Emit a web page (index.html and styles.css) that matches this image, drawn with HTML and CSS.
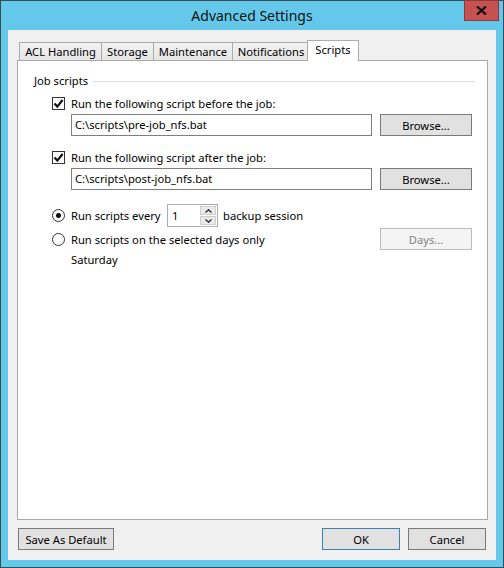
FILE: index.html
```html
<!DOCTYPE html>
<html lang="en">
<head>
    <meta charset="UTF-8">
    <title>Advanced Settings</title>
    <link rel="stylesheet" href="styles.css">
</head>
<body>
    <div class="window">
        <div class="titlebar">
            <span class="title">Advanced Settings</span>
            <button class="close">
                <svg width="11" height="9" viewBox="0 0 11 9"><path d="M1 0.5 L10 8.5 M10 0.5 L1 8.5" stroke="#111" stroke-width="2.2"/></svg>
            </button>
        </div>
        <div class="client">
            <div class="tabs">
                <div class="tab tab-acl">ACL Handling</div>
                <div class="tab tab-storage">Storage</div>
                <div class="tab tab-maint">Maintenance</div>
                <div class="tab tab-notif">Notifications</div>
                <div class="tab tab-active">Scripts</div>
            </div>
            <div class="panel">
                <div class="group-title">
                    <span>Job scripts</span>
                    <div class="group-line"></div>
                </div>

                <!-- before the job -->
                <div class="check-row row-first">
                    <span class="checkbox">
                        <svg width="11" height="11" viewBox="0 0 11 11"><path d="M1.5 5.5 L4.3 8.6 L9.6 2" fill="none" stroke="#111" stroke-width="2.2"/></svg>
                    </span>
                    <span>Run the following script before the job:</span>
                </div>
                <div class="path-row">
                    <div class="textbox">C:\scripts\pre-job_nfs.bat</div>
                    <button class="btn">Browse...</button>
                </div>

                <!-- after the job -->
                <div class="check-row row-second">
                    <span class="checkbox">
                        <svg width="11" height="11" viewBox="0 0 11 11"><path d="M1.5 5.5 L4.3 8.6 L9.6 2" fill="none" stroke="#111" stroke-width="2.2"/></svg>
                    </span>
                    <span>Run the following script after the job:</span>
                </div>
                <div class="path-row">
                    <div class="textbox">C:\scripts\post-job_nfs.bat</div>
                    <button class="btn">Browse...</button>
                </div>

                <div class="radio-row row-every">
                    <span class="radio checked"></span>
                    <span class="every-label">Run scripts every</span>
                    <div class="spinner">
                        <span class="spin-value">1</span>
                        <div class="spin-btns">
                            <span class="spin-btn">
                                <svg width="7" height="4" viewBox="0 0 7 4"><path d="M0.5 3.5 L3.5 0.8 L6.5 3.5" fill="none" stroke="#222" stroke-width="1.2"/></svg>
                            </span>
                            <span class="spin-btn">
                                <svg width="7" height="4" viewBox="0 0 7 4"><path d="M0.5 0.5 L3.5 3.2 L6.5 0.5" fill="none" stroke="#222" stroke-width="1.2"/></svg>
                            </span>
                        </div>
                    </div>
                    <span class="after-spin">backup session</span>
                </div>

                <div class="radio-row row-days">
                    <span class="radio"></span>
                    <span>Run scripts on the selected days only</span>
                    <button class="btn btn-disabled">Days...</button>
                </div>
                <div class="days-text">Saturday</div>
            </div>
            <div class="footer">
                <button class="btn btn-default">Save As Default</button>
                <div class="footer-right">
                    <button class="btn btn-ok">OK</button>
                    <button class="btn btn-cancel">Cancel</button>
                </div>
            </div>
        </div>
    </div>
</body>
</html>
```

FILE: styles.css
```css
body {
    margin: 0;
    font-family: 'Noto Sans', 'Open Sans', sans-serif;
    font-size: 11.2px;
    color: #000;
}

.window {
    width: 504px;
    height: 568px;
    box-sizing: border-box;
    border: 1px solid #3a4a52;
    background-color: #63c8e9;
    display: flex;
    flex-direction: column;
}

.titlebar {
    height: 29px;
    display: grid;
    grid-template-columns: 1fr auto 1fr;
}

.title {
    grid-column: 2;
    font-size: 14px;
    line-height: 29px;
    color: #111;
}

.close {
    grid-column: 3;
    justify-self: end;
    align-self: start;
    width: 35px;
    height: 21px;
    margin: -1px 4px 0 0;
    padding: 0;
    border: 1px solid #8a3c3c;
    background-color: #c75050;
    display: flex;
    align-items: center;
    justify-content: center;
}

.client {
    flex: 1;
    margin: 0 7px 7px;
    background-color: #f0f0f0;
    padding: 10px 8px 10px 9px;
    display: flex;
    flex-direction: column;
}

/* tab strip */
.tabs {
    height: 20px;
    display: flex;
    align-items: flex-end;
    padding-left: 2px;
}

.tab {
    height: 18px;
    box-sizing: border-box;
    border: 1px solid #acacac;
    border-bottom: none;
    margin-right: -1px;
    background: linear-gradient(#f2f2f2, #e6e6e6);
    text-align: center;
    line-height: 18px;
    white-space: nowrap;
}

.tab-acl { width: 83px; }
.tab-storage { width: 53px; }
.tab-maint { width: 80px; }
.tab-notif { width: 78px; }

.tab-active {
    position: relative;
    z-index: 1;
    width: 52px;
    height: 21px;
    margin-left: -2px;
    margin-bottom: -1px;
    background: #fff;
    line-height: 18px;
}

.panel {
    height: 460px;
    box-sizing: border-box;
    border: 1px solid #a9a9a9;
    background-color: #fff;
    padding: 12px 12px 0 16px;
}

.group-title {
    display: flex;
    align-items: center;
    height: 16px;
    line-height: 16px;
}

.group-line {
    flex: 1;
    height: 1px;
    background-color: #dcdcdc;
    margin-left: 5px;
}

.check-row, .radio-row {
    display: flex;
    align-items: center;
    padding-left: 18px;
    height: 16px;
    white-space: nowrap;
}

.row-first { margin-top: 6px; }
.row-second { margin-top: 13px; }

.checkbox {
    width: 13px;
    height: 13px;
    box-sizing: border-box;
    border: 1px solid #333;
    background: #fff;
    margin-right: 6px;
    display: flex;
    align-items: center;
    justify-content: center;
}

.path-row {
    display: flex;
    margin: 3px 0 0 37px;
    gap: 8px;
}

.textbox {
    width: 301px;
    height: 22px;
    box-sizing: border-box;
    border: 1px solid #7f7f7f;
    background: #fff;
    padding-left: 3px;
    line-height: 20px;
}

.btn {
    font-family: inherit;
    font-size: 11.2px;
    color: #000;
    height: 22px;
    width: 92px;
    box-sizing: border-box;
    padding: 0;
    border: 1px solid #7a7a7a;
    background-color: #e1e1e1;
}

.btn-disabled {
    margin-left: auto;
    margin-right: 3px;
    border-color: #bcbcbc;
    background-color: #f4f4f4;
    color: #838383;
}

.radio {
    width: 13px;
    height: 13px;
    box-sizing: border-box;
    border: 1px solid #333;
    border-radius: 50%;
    background: #fff;
    margin-right: 6px;
    display: flex;
    align-items: center;
    justify-content: center;
}

.radio.checked::after {
    content: "";
    width: 5px;
    height: 5px;
    border-radius: 50%;
    background-color: #111;
}

.row-every {
    height: 23px;
    margin-top: 14px;
}

.every-label {
    width: 96px;
}

.spinner {
    width: 51px;
    height: 23px;
    box-sizing: border-box;
    border: 1px solid #abadb3;
    background: #fff;
    display: flex;
    padding: 1px;
}

.spin-value {
    flex: 1;
    padding-left: 3px;
    line-height: 19px;
}

.spin-btns {
    width: 16px;
    display: flex;
    flex-direction: column;
    gap: 1px;
}

.spin-btn {
    flex: 1;
    background: #e9e9e9;
    border: 1px solid #cfcfcf;
    display: flex;
    align-items: center;
    justify-content: center;
}

.after-spin {
    margin-left: 5px;
}

.row-days {
    height: 22px;
    margin-top: 1px;
}

.days-text {
    margin: 2px 0 0 37px;
    line-height: 16px;
}

.footer {
    display: flex;
    justify-content: space-between;
    margin-top: 8px;
    padding: 0 2px 0 1px;
}

.btn-default {
    width: 96px;
}

.footer-right {
    display: flex;
    gap: 8px;
}

.btn-ok, .btn-cancel {
    width: 78px;
}

.btn-ok {
    border-color: #3c7fb1;
}
```
